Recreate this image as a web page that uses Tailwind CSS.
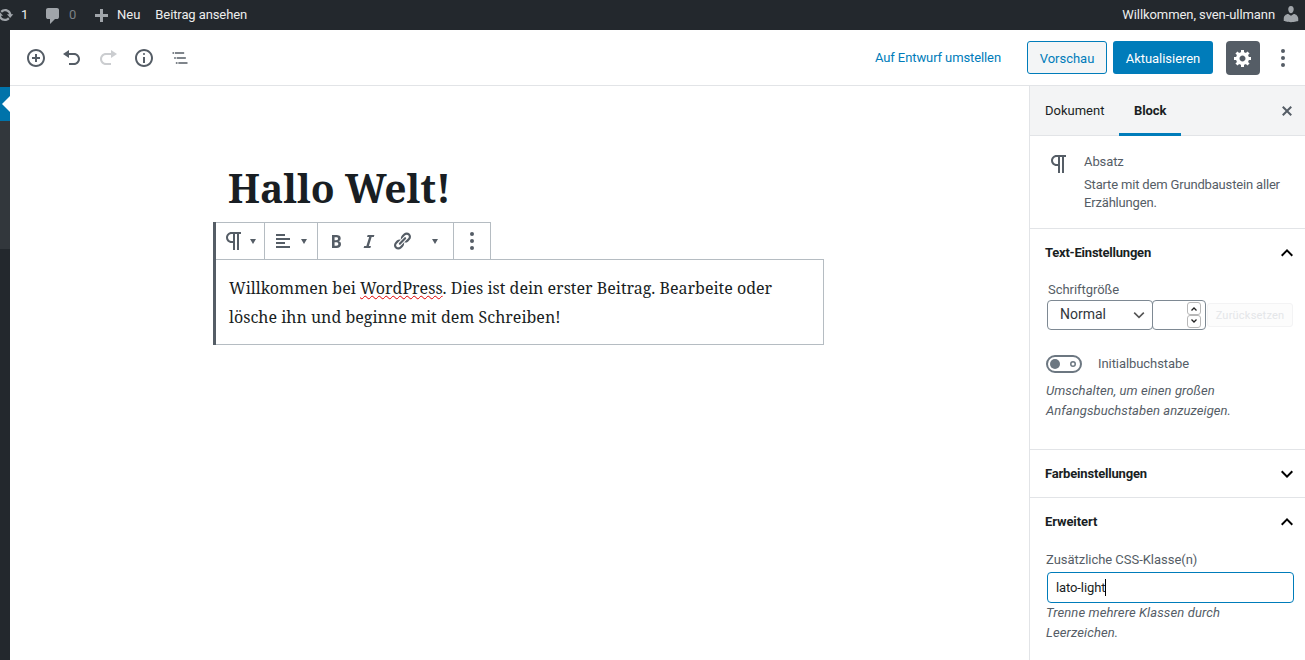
<!DOCTYPE html>
<html lang="de">
<head>
<meta charset="utf-8">
<title>Beitrag bearbeiten</title>
<script src="https://cdn.jsdelivr.net/npm/@tailwindcss/browser@4"></script>
</head>
<body class="h-[660px] w-[1305px] overflow-hidden bg-white font-['Roboto','Liberation_Sans',sans-serif] text-[13px] text-[#191e23]">
<header class="flex h-[30px] items-center bg-[#23282d] leading-[30px] text-[#eeeeee]">
  <svg class="-ml-1 size-[18px] shrink-0 fill-[#a0a5aa]" viewBox="0 0 20 20"><path d="M10.2 3.28c3.53 0 6.43 2.61 6.92 6h2.08l-3.5 4-3.5-4h2.32c-.45-1.97-2.21-3.45-4.32-3.45-1.45 0-2.73.71-3.54 1.78L4.95 5.66C6.23 4.2 8.11 3.28 10.2 3.28zm-.4 13.44c-3.52 0-6.43-2.61-6.92-6H.8l3.5-4c1.17 1.33 2.33 2.67 3.5 4H5.48c.45 1.97 2.21 3.45 4.32 3.45 1.45 0 2.73-.71 3.54-1.78l1.71 1.95c-1.28 1.46-3.15 2.38-5.25 2.38z"/></svg>
  <span class="ml-[7px] w-[22px]">1</span>
  <svg class="mt-0.5 size-5 shrink-0 fill-[#a0a5aa]" viewBox="0 0 20 20"><path d="M5 2h9q.82 0 1.41.59T16 4v7q0 .82-.59 1.41T14 13h-2l-5 5v-5H5q-.82 0-1.41-.59T3 11V4q0-.82.59-1.41T5 2z"/></svg>
  <span class="ml-[6px] w-[22px] text-[#7c8186]">0</span>
  <svg class="mt-[3px] size-5 shrink-0 fill-[#a0a5aa]" viewBox="0 0 20 20"><path d="M17 7v3h-5v5H9v-5H4V7h5V2h3v5h5z"/></svg>
  <span class="ml-[6px]">Neu</span>
  <span class="ml-[15px] tracking-[-0.1px]">Beitrag ansehen</span>
  <span class="ml-auto tracking-[-0.08px]">Willkommen, sven-ullmann</span>
  <svg class="mr-[4px] ml-[6px] -mt-0.5 size-5 shrink-0 fill-[#a0a5aa]" viewBox="0 0 20 20"><path d="M10 9.25c-2.27 0-2.73-3.44-2.73-3.44C7 4.02 7.82 2 9.97 2c2.16 0 2.98 2.02 2.71 3.81 0 0-.41 3.44-2.68 3.44zm0 2.57L12.72 10c2.39 0 4.52 2.33 4.52 4.53v2.49s-3.65 1.13-7.24 1.13c-3.65 0-7.24-1.13-7.24-1.13v-2.49c0-2.25 1.94-4.48 4.47-4.48z"/></svg>
</header>
<div class="flex h-[630px]">
  <nav class="flex w-[10px] shrink-0 flex-col bg-[#23282d]">
    <div class="mt-[57px] flex h-[34px] items-center justify-end bg-[#0073aa]"><svg class="h-4 w-2 fill-white" viewBox="0 0 8 16"><path d="M8 0v16L0 8z"/></svg></div>
    <div class="h-[128px] bg-[#32373c]"></div>
  </nav>
  <div class="flex min-w-0 flex-1 flex-col">
    <div class="flex h-14 shrink-0 items-center border-b border-[#e2e4e7] fill-[#555d66]">
      <div class="ml-4 flex gap-4">
        <svg class="size-5" viewBox="0 0 20 20"><path d="M10 1c-5 0-9 4-9 9s4 9 9 9 9-4 9-9-4-9-9-9zm0 16c-3.9 0-7-3.1-7-7s3.1-7 7-7 7 3.1 7 7-3.1 7-7 7zm1-11H9v3H6v2h3v3h2v-3h3V9h-3V6z"/></svg>
        <svg class="size-5" viewBox="0 0 20 20"><path d="M12 5H7V2L1 6l6 4V7h5c2.2 0 4 1.8 4 4s-1.8 4-4 4H7v2h5c3.3 0 6-2.7 6-6s-2.7-6-6-6z"/></svg>
        <svg class="size-5 opacity-30" viewBox="0 0 20 20"><path d="M8 5h5V2l6 4-6 4V7H8c-2.2 0-4 1.8-4 4s1.8 4 4 4h5v2H8c-3.3 0-6-2.7-6-6s2.7-6 6-6z"/></svg>
        <svg class="size-5" viewBox="0 0 20 20"><path d="M9 15h2V9H9v6zm1-10c-.5 0-1 .5-1 1s.5 1 1 1 1-.5 1-1-.5-1-1-1zm0-4c-5 0-9 4-9 9s4 9 9 9 9-4 9-9-4-9-9-9zm0 16c-3.9 0-7-3.1-7-7s3.1-7 7-7 7 3.1 7 7-3.1 7-7 7z"/></svg>
        <svg class="size-5" viewBox="0 0 24 24"><path d="M5 5H3v2h2V5zm3 8h11v-2H8v2zm9-8H6v2h11V5zM7 11H5v2h2v-2zm0 8h2v-2H7v2zm3-2v2h11v-2H10z"/></svg>
      </div>
      <span class="mr-[26px] ml-auto tracking-[-0.1px] text-[#007cba]">Auf Entwurf umstellen</span>
      <button class="h-[33px] w-20 rounded-[3px] border border-[#007cba] bg-[#f3f5f6] pt-0.5 text-[#007cba]">Vorschau</button>
      <button class="ml-1.5 h-[33px] w-[100px] rounded-[3px] bg-[#007cba] pt-0.5 tracking-[-0.04px] text-white">Aktualisieren</button>
      <button class="ml-[13px] flex size-[34px] items-center justify-center rounded bg-[#555d66]"><svg class="size-5 fill-white" viewBox="0 0 20 20"><path d="M18 12h-2.18c-.17.7-.44 1.35-.81 1.93l1.54 1.54-2.1 2.1-1.54-1.54c-.58.36-1.23.63-1.91.79V19H8v-2.18c-.68-.16-1.33-.43-1.91-.79l-1.54 1.54-2.12-2.12 1.54-1.54c-.36-.58-.63-1.23-.79-1.91H1V9.03h2.17c.16-.7.44-1.35.8-1.94L2.43 5.55l2.1-2.1 1.54 1.54c.58-.37 1.24-.64 1.93-.81V2h3v2.18c.68.16 1.33.43 1.91.79l1.54-1.54 2.12 2.12-1.54 1.54c.36.59.64 1.24.8 1.94H18V12zm-8.5 1.5c1.66 0 3-1.34 3-3s-1.34-3-3-3-3 1.34-3 3 1.34 3 3 3z"/></svg></button>
      <svg class="mr-3 ml-[13px] size-5" viewBox="0 0 20 20"><circle cx="10" cy="3" r="2"/><circle cx="10" cy="10" r="2"/><circle cx="10" cy="17" r="2"/></svg>
    </div>
    <div class="flex min-h-0 flex-1">
      <main class="min-w-0 flex-1 pt-[75px] pl-[203px] font-['Noto_Serif','Droid_Serif','Liberation_Serif',serif]">
        <h1 class="pl-[15px] text-[39px] leading-[54px] font-bold whitespace-nowrap">Hallo Welt!</h1>
        <div class="mt-[7px] w-[611px] border-l-[3px] border-[#555d66]">
          <div class="flex h-[37px] w-[275px] border-t border-r border-[#b5bcc2] fill-[#555d66]">
            <div class="flex w-[49px] items-center border-r border-[#b5bcc2] pl-[6px]">
              <svg class="size-6" viewBox="0 0 24 24"><path d="M11 5v7H9.5C7.6 12 6 10.4 6 8.5S7.6 5 9.5 5H11m8-2H9.5C6.5 3 4 5.5 4 8.5S6.5 14 9.5 14H11v7h2V5h2v16h2V5h2V3z"/></svg>
              <svg class="ml-1 h-[5px] w-1.5" viewBox="0 0 6 5"><path d="M0 0h6L3 5z"/></svg>
            </div>
            <div class="flex w-[53px] items-center border-r border-[#b5bcc2] pl-2">
              <svg class="size-5" viewBox="0 0 20 20"><path d="M12 5V3H3v2h9zm5 4V7H3v2h14zm-5 4v-2H3v2h9zm5 4v-2H3v2h14z"/></svg>
              <svg class="ml-2 h-[5px] w-1.5" viewBox="0 0 6 5"><path d="M0 0h6L3 5z"/></svg>
            </div>
            <div class="flex w-[136px] items-center border-r border-[#b5bcc2] pl-2">
              <svg class="size-5" viewBox="0 0 20 20"><path d="M6 4v13h4.54c1.37 0 2.46-.33 3.26-1 .8-.66 1.2-1.58 1.2-2.77 0-.84-.17-1.51-.51-2.01s-.9-.85-1.67-1.03v-.09c.57-.1 1.02-.4 1.36-.9s.51-1.13.51-1.91c0-1.14-.39-1.98-1.17-2.5C12.75 4.26 11.5 4 9.78 4H6zm2.57 5.15V6.26h1.36c.73 0 1.27.11 1.61.32.34.22.51.58.51 1.07 0 .54-.16.92-.47 1.15s-.82.35-1.51.35h-1.5zm0 2.19h1.6c1.44 0 2.16.53 2.16 1.61 0 .6-.17 1.05-.51 1.34s-.86.43-1.57.43H8.57v-3.38z"/></svg>
              <svg class="ml-[13px] size-5" viewBox="0 0 20 20"><path d="M14.78 6h-2.13l-2.8 9h2.12l-.62 2H4.6l.62-2h2.14l2.8-9H8.03l.62-2h6.75z"/></svg>
              <svg class="ml-[13px] size-5" viewBox="0 0 20 20"><path d="M17.74 2.76c1.68 1.69 1.68 4.41 0 6.1l-1.53 1.52c-1.12 1.12-2.7 1.47-4.14 1.09l2.62-2.61.76-.77.76-.76c.84-.84.84-2.2 0-3.04-.84-.85-2.2-.85-3.04 0l-.77.76-3.38 3.38c-.37-1.44-.02-3.02 1.1-4.14l1.52-1.53c1.69-1.68 4.42-1.68 6.1 0zM8.59 13.43l5.34-5.34c.42-.42.42-1.1 0-1.52-.44-.43-1.13-.39-1.53 0l-5.33 5.34c-.42.42-.42 1.1 0 1.52.44.43 1.13.39 1.52 0zm-.76 2.29l4.14-4.15c.38 1.44.03 3.02-1.09 4.14l-1.52 1.53c-1.69 1.68-4.41 1.68-6.1 0-1.68-1.68-1.68-4.42 0-6.1l1.53-1.52c1.12-1.12 2.7-1.47 4.14-1.1l-4.14 4.15c-.85.84-.85 2.2 0 3.05.84.84 2.2.84 3.04 0z"/></svg>
              <svg class="ml-5 h-[5px] w-1.5" viewBox="0 0 6 5"><path d="M0 0h6L3 5z"/></svg>
            </div>
            <div class="flex flex-1 items-center justify-center">
              <svg class="size-5" viewBox="0 0 20 20"><circle cx="10" cy="3" r="2"/><circle cx="10" cy="10" r="2"/><circle cx="10" cy="17" r="2"/></svg>
            </div>
          </div>
          <div class="h-[86px] border border-l-0 border-[#b5bcc2] pt-[14px] pl-[13px] text-base leading-[29px] whitespace-nowrap">
            <p>Willkommen bei <span class="underline decoration-[#e00000] decoration-wavy decoration-1 underline-offset-1">WordPress</span>. Dies ist dein erster Beitrag. Bearbeite oder</p>
            <p>lösche ihn und beginne mit dem Schreiben!</p>
          </div>
        </div>
      </main>
      <aside class="flex w-[276px] shrink-0 flex-col border-l border-[#e2e4e7]">
        <div class="flex h-[50px] shrink-0 border-b border-[#e2e4e7] bg-[#f3f4f5] leading-[50px]">
          <span class="w-[89px] pl-[15px]">Dokument</span>
          <span class="h-[50px] w-[62px] border-b-3 border-[#007cba] pl-[15px] font-bold tracking-[-0.1px]">Block</span>
          <svg class="mt-[15px] mr-2 ml-auto size-5 fill-[#555d66]" viewBox="0 0 20 20"><path d="M14.95 6.46L11.41 10l3.54 3.54-1.41 1.41L10 11.42l-3.53 3.53-1.42-1.42L8.58 10 5.05 6.47l1.42-1.42L10 8.58l3.54-3.53z"/></svg>
        </div>
        <section class="flex h-[93px] shrink-0 border-b border-[#e2e4e7] pt-4 pl-[17px] text-[#555d66]">
          <svg class="size-6 fill-[#555d66]" viewBox="0 0 24 24"><path d="M11 5v7H9.5C7.6 12 6 10.4 6 8.5S7.6 5 9.5 5H11m8-2H9.5C6.5 3 4 5.5 4 8.5S6.5 14 9.5 14H11v7h2V5h2v16h2V5h2V3z"/></svg>
          <div class="mt-px ml-[13px] leading-[18px]"><h2 class="mb-[5px] tracking-[-0.1px]">Absatz</h2><p class="tracking-[-0.17px]">Starte mit dem Grundbaustein aller<br>Erzählungen.</p></div>
        </section>
        <section class="h-[221px] shrink-0 border-b border-[#e2e4e7]">
          <h2 class="flex h-12 items-center justify-between pr-[6px] pl-[15px] font-bold tracking-[-0.22px]">Text-Einstellungen<svg class="size-6" viewBox="0 0 24 24"><path d="M12,8l-6,6l1.41,1.41L12,10.83l4.59,4.58L18,14L12,8z"/></svg></h2>
          <div class="pl-4 text-[#555d66]">
            <div class="mt-[3px] pl-0.5 leading-5 tracking-[-0.05px]">Schriftgröße</div>
            <div class="ml-px flex items-center">
              <div class="flex h-[30px] w-[106px] items-center justify-between rounded border border-[#7e8993] pr-[5px] pl-3 text-[14px] text-[#32373c]"><span class="pb-0.5">Normal</span><svg class="size-4 fill-none stroke-[#555] stroke-2" viewBox="0 0 20 20"><path d="M4 7l6 6 6-6"/></svg></div>
              <div class="-ml-px flex h-[30px] w-[54px] flex-col items-end justify-center rounded border border-[#7e8993] pr-1">
                <div class="flex h-[13px] w-[14px] items-center justify-center rounded-[3px] border border-[#b8b8b8]"><svg class="h-1 w-1.5 fill-none stroke-[#222] stroke-[1.3]" viewBox="0 0 6 4"><path d="M.5 3.5L3 1l2.500 2.500"/></svg></div>
                <div class="flex h-[13px] w-[14px] items-center justify-center rounded-[3px] border border-[#b8b8b8] pb-0.5"><svg class="h-1 w-1.5 fill-none stroke-[#222] stroke-[1.3]" viewBox="0 0 6 4"><path d="M.5.5L3 3l2.500-2.500"/></svg></div>
              </div>
              <div class="ml-px flex h-6 w-[86px] items-center justify-center rounded-[3px] border border-[#f3f3f4] bg-[#fcfcfc] pt-0.5 text-[11px] tracking-[.22px] text-[#e4e6e9]">Zurücksetzen</div>
            </div>
            <div class="mt-6 flex h-5 items-center">
              <div class="flex h-[18px] w-9 items-center justify-between rounded-full border-2 border-[#6c7781] pr-1 pl-0.5"><span class="size-[10px] rounded-full bg-[#6c7781]"></span><svg class="size-1.5 fill-none stroke-[#6c7781] stroke-[1.5]" viewBox="0 0 6 6"><circle cx="3" cy="3" r="2.25"/></svg></div>
              <span class="ml-4 tracking-[-0.07px]">Initialbuchstabe</span>
            </div>
            <p class="mt-[7px] leading-5 tracking-[.07px] italic">Umschalten, um einen großen<br>Anfangsbuchstaben anzuzeigen.</p>
          </div>
        </section>
        <h2 class="flex h-12 shrink-0 items-center justify-between border-b border-[#e2e4e7] pr-[6px] pl-[15px] font-bold tracking-[-0.18px]">Farbeinstellungen<svg class="size-6" viewBox="0 0 24 24"><path d="M7.41,8.59L12,13.17l4.59-4.58L18,10l-6,6l-6-6L7.41,8.59z"/></svg></h2>
        <section class="shrink-0">
          <h2 class="flex h-12 items-center justify-between pr-[6px] pl-[15px] font-bold tracking-[-0.1px]">Erweitert<svg class="size-6" viewBox="0 0 24 24"><path d="M12,8l-6,6l1.41,1.41L12,10.83l4.59,4.58L18,14L12,8z"/></svg></h2>
          <div class="pl-4 leading-5 text-[#555d66]">
            <div class="mt-1 tracking-[-0.03px]">Zusätzliche CSS-Klasse(n)</div>
            <div class="mt-[2px] ml-px flex h-[31px] w-[247px] items-center rounded border border-[#007cba] pl-2 tracking-[-0.1px] text-[#191e23]">lato-light<span class="h-[17px] w-px bg-black"></span></div>
            <p class="tracking-[.12px] italic">Trenne mehrere Klassen durch<br>Leerzeichen.</p>
          </div>
        </section>
      </aside>
    </div>
  </div>
</div>
</body>
</html>
